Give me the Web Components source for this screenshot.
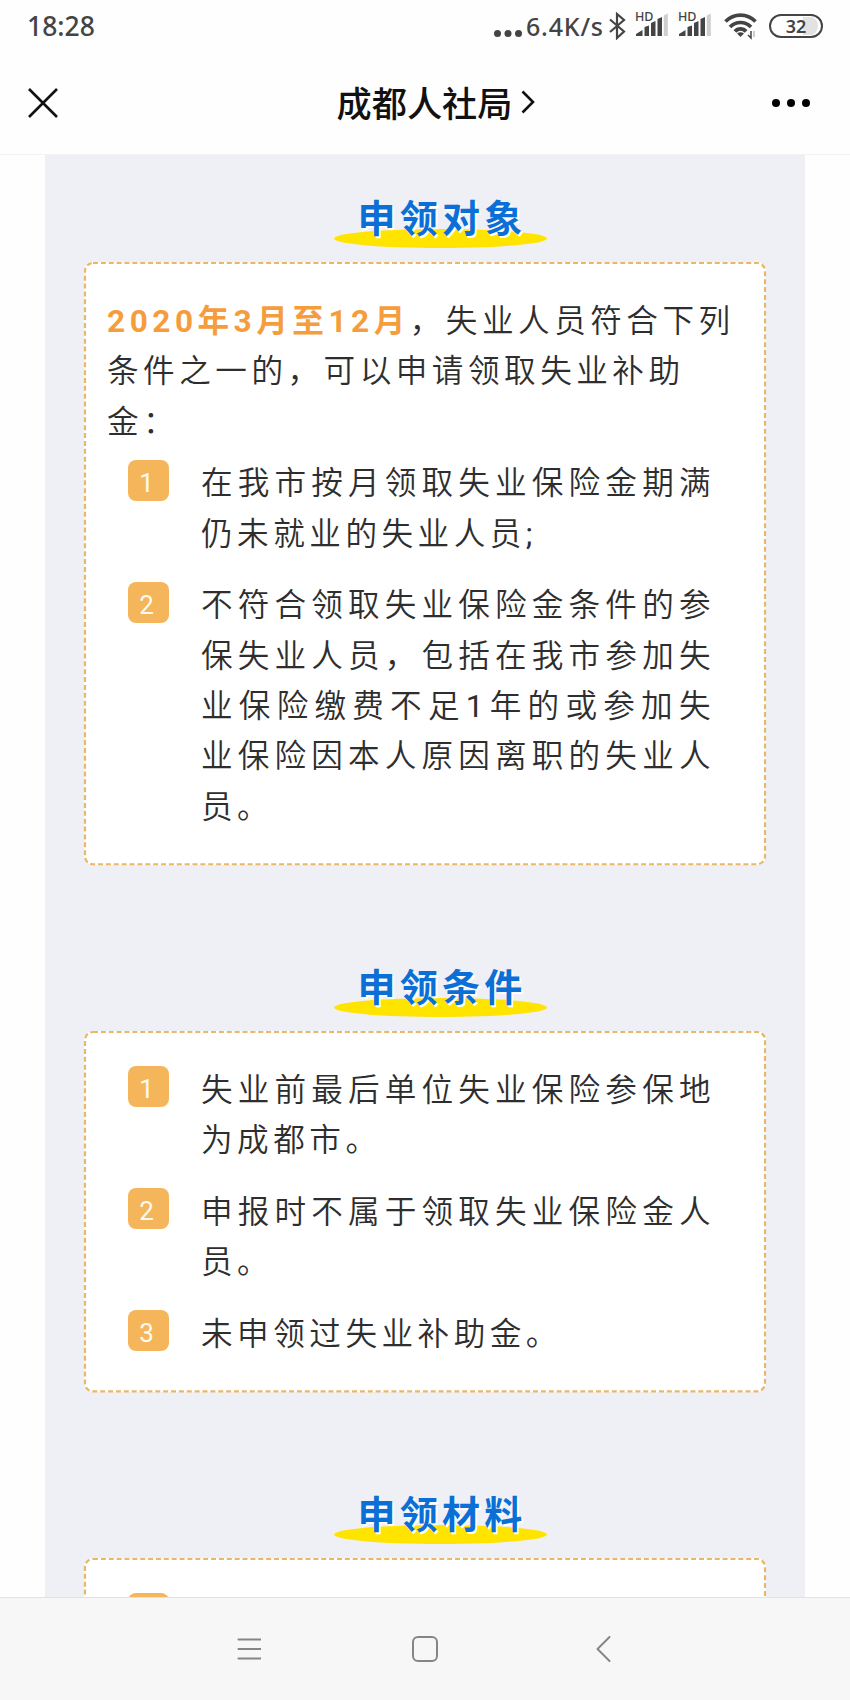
<!DOCTYPE html>
<html lang="zh-CN">
<head>
<meta charset="UTF-8">
<meta name="viewport" content="width=device-width, initial-scale=1">
<title>成都人社局</title>
<style>
  html, body {
    margin: 0;
    height: 100%;
  }

  body {
    background: #fefefe;
    color: #2e2e2e;
    font-family: Roboto, "Noto Sans CJK SC", sans-serif;
    overflow: hidden;
  }
</style>
</head>
<body>
<phone-screen>
  <status-bar slot="top" time="18:28" speed="6.4K/s" battery="32"></status-bar>
  <page-header slot="top">成都人社局</page-header>

  <section-title>申领对象</section-title>
  <dashed-card>
    <lead-text><b>2020年3月至12月</b>，失业人员符合下列条件之一的，可以申请领取失业补助金：</lead-text>
    <number-item number="1">在我市按月领取失业保险金期满仍未就业的失业人员<span>;</span></number-item>
    <number-item number="2">不符合领取失业保险金条件的参保失业人员，包括在我市参加失业保险缴费不足<span>1</span>年的或参加失业保险因本人原因离职的失业人员。</number-item>
  </dashed-card>

  <section-title>申领条件</section-title>
  <dashed-card>
    <number-item number="1">失业前最后单位失业保险参保地为成都市。</number-item>
    <number-item number="2">申报时不属于领取失业保险金人员。</number-item>
    <number-item number="3">未申领过失业补助金。</number-item>
  </dashed-card>

  <section-title>申领材料</section-title>
  <dashed-card>
    <number-item></number-item>
  </dashed-card>

  <nav-bar slot="bottom"></nav-bar>
</phone-screen>

<script>
class BaseElement extends HTMLElement {
  constructor() {
    super();
    this.attachShadow({ mode: "open" });
  }

  connectedCallback() {
    this.shadowRoot.innerHTML = /* html */`
    <style>${this.constructor.styles}</style>
    ${this.render()}`;
  }
}

class PhoneScreen extends BaseElement {
  static get styles() {
    return /* css */`
      :host {
        display: flex;
        flex-direction: column;
        height: 1700px;
        width: 850px;
      }

      main {
        flex: 1;
        min-height: 0;
        overflow: hidden;
        border-top: 1px solid #f3f3f3;
      }

      .article {
        box-sizing: border-box;
        width: 760px;
        min-height: 100%;
        margin: 0 auto;
        padding: 36px 39px 0;
        background: #eef0f5;
      }
    `;
  }

  render() {
    return /* html */`
    <slot name="top"></slot>
    <main><div class="article"><slot></slot></div></main>
    <slot name="bottom"></slot>`;
  }
}

class StatusBar extends BaseElement {
  static get styles() {
    return /* css */`
      :host {
        display: flex;
        justify-content: space-between;
        align-items: center;
        height: 52px;
        padding: 0 27px;
        color: #444;
        font-family: "Noto Sans", sans-serif;
        font-weight: 500;
      }

      .time {
        font-size: 26.5px;
      }

      .right {
        display: flex;
        align-items: center;
      }

      .speed {
        width: 83px;
        margin-left: 4px;
        font-size: 25px;
        letter-spacing: 0.8px;
        white-space: nowrap;
      }

      svg {
        display: block;
        fill: currentColor;
      }

      .signal {
        position: relative;
        margin-left: 10px;
      }

      .signal span {
        position: absolute;
        left: -1px;
        top: -4px;
        font-size: 12.5px;
        font-weight: 500;
        line-height: 15px;
      }

      .battery {
        box-sizing: border-box;
        width: 54px;
        height: 24px;
        margin-left: 12px;
        border: 2px solid #444;
        border-radius: 12px;
        background: linear-gradient(90deg, transparent 65%, #e2e2e2 65%) content-box;
        padding: 1px 3px;
        font-size: 18px;
        font-weight: 600;
        line-height: 18px;
        text-align: center;
      }
    `;
  }

  signal() {
    return /* html */`
    <div class="signal">
      <span>HD</span>
      <svg width="33" height="26" viewBox="0 0 33 26">
        <path d="M0 23v-2l6.500-4v6zM8.500 23V14l4.500-1.500V23zM15 23V10l4.500-2v15zM21.500 23V6l4.500-2v19z"/>
        <path d="M27.800 23V2.500l4-2V23z" fill="#cfcfcf"/>
      </svg>
    </div>`;
  }

  render() {
    return /* html */`
    <div class="time">${this.getAttribute("time")}</div>
    <div class="right">
      <svg width="28" height="27" viewBox="0 0 28 27"><circle cx="3.5" cy="20.5" r="3.5"/><circle cx="14" cy="20.5" r="3.5"/><circle cx="24.5" cy="20.5" r="3.5"/></svg>
      <div class="speed">${this.getAttribute("speed")}</div>
      <svg width="17" height="28" viewBox="0 0 17 28"><path d="M1 7.500l14 12-7 6.500V2l7 6L1 20" fill="none" stroke="currentColor" stroke-width="2.200"/></svg>
      ${this.signal()}
      ${this.signal()}
      <svg style="margin-left: 12px" width="33" height="28" viewBox="0 0 33 28">
        <g fill="none" stroke="currentColor" stroke-width="3.7">
          <path d="M1.500 9.500c8.500-8.500 21.500-8.500 30 0M6 15c6-6 15-6 21 0M11 19.500c3-3.500 8-3.500 11 0"/>
        </g>
        <path d="M13 21.500q3.500-2.500 7 0l-3.500 3.500z"/>
        <path d="M27 19v7l-3-3" fill="none" stroke="currentColor" stroke-width="1.500"/>
        <path d="M30 25v-6" fill="none" stroke="#bbb" stroke-width="1.500"/>
      </svg>
      <div class="battery">${this.getAttribute("battery")}</div>
    </div>`;
  }
}

class PageHeader extends BaseElement {
  static get styles() {
    return /* css */`
      :host {
        display: grid;
        grid-template-columns: 1fr auto 1fr;
        align-items: center;
        height: 102px;
        padding: 0 39px 0 28px;
        color: #111;
      }

      .title {
        display: flex;
        align-items: center;
        gap: 9px;
        margin: -2px 0 0 33px;
        font: 500 35.2px/50px "Noto Sans CJK SC", sans-serif;
      }

      svg {
        display: block;
        fill: none;
        stroke: #111;
        stroke-width: 2.6;
      }

      .more {
        justify-self: end;
        fill: #000;
        stroke: none;
      }
    `;
  }

  render() {
    return /* html */`
    <svg width="30" height="30" viewBox="0 0 30 30"><path d="M1 1l28 28M29 1L1 29"/></svg>
    <div class="title">
      <slot></slot>
      <svg width="14" height="24" viewBox="0 0 14 24"><path d="M1.500 1.500L12 12 1.500 22.500"/></svg>
    </div>
    <svg class="more" width="40" height="10" viewBox="0 0 40 10"><circle cx="5" cy="5" r="4"/><circle cx="20" cy="5" r="4"/><circle cx="35" cy="5" r="4"/></svg>`;
  }
}

class SectionTitle extends BaseElement {
  static get styles() {
    return /* css */`
      :host {
        display: flex;
        justify-content: center;
        height: 71px;
        padding-left: 30px;
      }

      .title {
        position: relative;
        z-index: 0;
        width: 213px;
        color: #0b6fd6;
        font: 700 38px/50px "Noto Sans CJK SC", sans-serif;
        letter-spacing: 4.3px;
        text-indent: 4px;
        text-align: center;
        text-shadow: 2px 2px 0 #fff;
      }

      /* yellow brush under the words */
      .title::before {
        content: "";
        position: absolute;
        z-index: -1;
        left: 0;
        top: 38px;
        width: 213px;
        height: 19px;
        border-radius: 50%;
        background: #ffe400;
      }
    `;
  }

  render() {
    return /* html */`<div class="title"><slot></slot></div>`;
  }
}

class DashedCard extends BaseElement {
  static get styles() {
    return /* css */`
      :host {
        display: block;
        position: relative;
        margin-bottom: 94.5px;
        padding: 35px 23px 32px;
        border-radius: 9px;
        background: #fff;
      }

      svg {
        position: absolute;
        inset: 0;
        width: 100%;
        height: 100%;
        overflow: visible;
      }

      rect {
        x: 1px;
        y: 1px;
        width: calc(100% - 2px);
        height: calc(100% - 2px);
        rx: 8px;
        fill: none;
        stroke: #e9b768;
        stroke-width: 2.2;
        stroke-dasharray: 5 2.87;
      }
    `;
  }

  render() {
    return /* html */`<svg><rect/></svg><slot></slot>`;
  }
}

class LeadText extends BaseElement {
  static get styles() {
    return /* css */`
      :host {
        display: block;
        margin-bottom: 11px;
        font-size: 31.6px;
        font-weight: 350;
        line-height: 50.4px;
        letter-spacing: 4.5px;
      }

      ::slotted(b) {
        color: #f59d3d;
        font-weight: 700;
      }
    `;
  }

  render() {
    return /* html */`<slot></slot>`;
  }
}

class NumberItem extends BaseElement {
  static get styles() {
    return /* css */`
      :host {
        display: grid;
        grid-template-columns: 41px 514px;
        gap: 32px;
        padding-left: 21px;
      }

      :host(:not(:last-child)) {
        margin-bottom: 21.2px;
      }

      .badge {
        box-sizing: border-box;
        height: 41px;
        margin-top: 0.5px;
        padding-right: 4px;
        border-radius: 8px;
        background: #f5b65b;
        color: #fffaf0;
        font-size: 26px;
        line-height: 46px;
        text-align: center;
      }

      .text {
        font-size: 31.6px;
        font-weight: 350;
        line-height: 50.4px;
        letter-spacing: 4.5px;
        text-align: justify;
      }

      /* latin glyphs keep the regular weight */
      ::slotted(span) {
        font-weight: 400;
      }
    `;
  }

  render() {
    return /* html */`
    <div class="badge">${this.getAttribute("number") ?? ""}</div>
    <div class="text"><slot></slot></div>`;
  }
}

class NavBar extends BaseElement {
  static get styles() {
    return /* css */`
      :host {
        box-sizing: border-box;
        display: grid;
        grid-template-columns: repeat(3, 177.5px);
        justify-content: center;
        justify-items: center;
        align-items: center;
        height: 103px;
        border-top: 1px solid #e2e2e2;
        background: #f7f7f7;
      }

      svg {
        fill: none;
        stroke: #858585;
        stroke-width: 2;
        stroke-linecap: round;
        stroke-linejoin: round;
      }
    `;
  }

  render() {
    return /* html */`
    <svg width="26" height="28" viewBox="0 0 26 28"><path d="M3.500 4.500h22M3.500 14h22M3.500 23.500h22"/></svg>
    <svg width="28" height="28" viewBox="0 0 28 28"><rect x="2" y="2" width="24" height="24" rx="5"/></svg>
    <svg width="16" height="28" viewBox="0 0 16 28"><path d="M14.500 2L2.500 14l12 12"/></svg>`;
  }
}

customElements.define("phone-screen", PhoneScreen);
customElements.define("status-bar", StatusBar);
customElements.define("page-header", PageHeader);
customElements.define("section-title", SectionTitle);
customElements.define("dashed-card", DashedCard);
customElements.define("lead-text", LeadText);
customElements.define("number-item", NumberItem);
customElements.define("nav-bar", NavBar);
</script>
</body>
</html>
